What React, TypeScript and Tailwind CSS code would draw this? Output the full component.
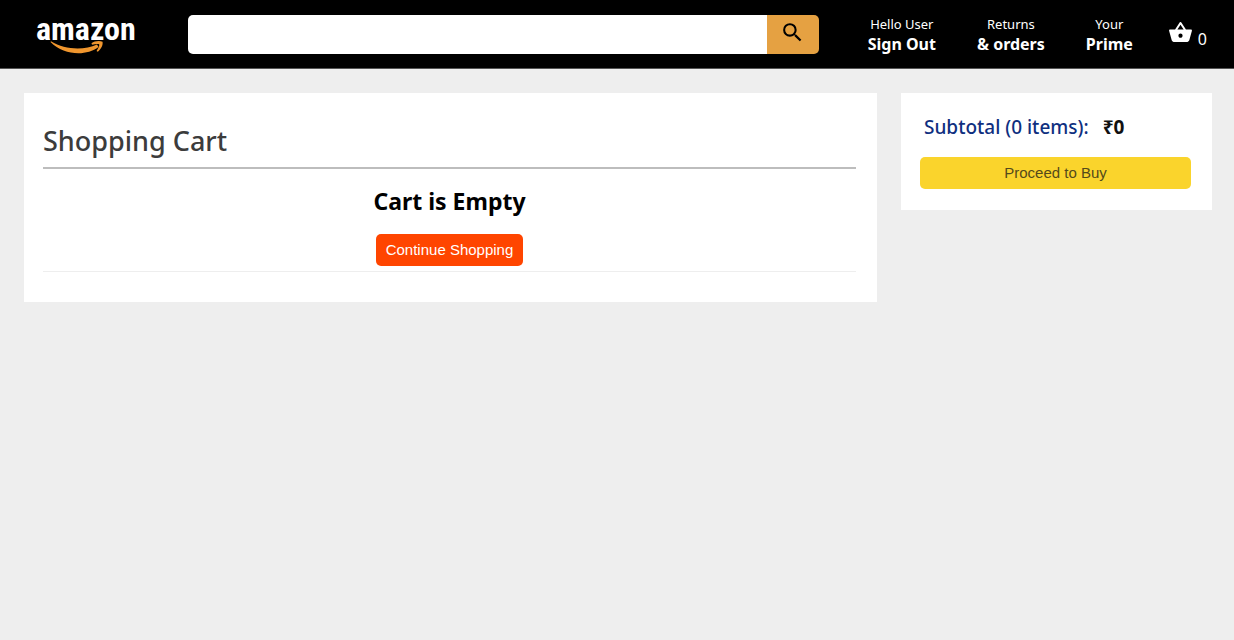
import React from "react";
import { MdSearch, MdShoppingBasket } from "react-icons/md";

const navLinks = [
  { top: "Hello User", bottom: "Sign Out" },
  { top: "Returns", bottom: "& orders" },
  { top: "Your", bottom: "Prime" },
];

function Logo() {
  return (
    <a href="#home" aria-label="amazon home" className="ml-9 block w-[99px] shrink-0">
      <svg viewBox="0 0 99 38" className="block w-full overflow-visible">
        <text
          x="0"
          y="25"
          fill="#fff"
          className="font-['Roboto_Condensed','Roboto',sans-serif] text-[32px] font-bold"
        >
          amazon
        </text>
        <path
          d="M14.500 27 C28 40.500 50 41.500 62.500 32 L61 29.500 C48 35.500 29 35 15 26.300 Z"
          fill="#f0962e"
        />
        <path
          d="M55.500 28.300 C58.500 25.600 64 25.500 66.500 26.700 C67.300 30 65 34 61.800 36.800 L60.600 36 C62 33.500 63.700 30.500 63.200 29.200 C61.500 28.600 58.500 29.200 56 29.700 Z"
          fill="#f0962e"
        />
      </svg>
    </a>
  );
}

function Header() {
  return (
    <header className="flex h-[69px] items-center border-b border-[#555] bg-black text-white">
      <Logo />
      <form role="search" className="ml-[53px] flex h-[39px] min-w-0 flex-1 overflow-hidden rounded-[5px]">
        <input type="search" aria-label="Search products" className="min-w-0 flex-1 bg-white px-3 text-black outline-none" />
        <button type="button" aria-label="Search" className="flex w-[52px] justify-center bg-[#e5a142] pt-[5px] text-black">
          <MdSearch size={25} />
        </button>
      </form>
      <nav className="ml-[49px] flex items-center gap-[41px]">
        {navLinks.map((link) => (
          <a key={link.top} href="#account" className="flex flex-col items-center whitespace-nowrap leading-5">
            <span className="text-[13px] leading-5">{link.top}</span>
            <span className="text-base font-bold leading-5">{link.bottom}</span>
          </a>
        ))}
      </nav>
      <a href="#cart" aria-label="Cart, 0 items" className="ml-[35px] mr-[27px] flex items-center gap-[5px]">
        <MdShoppingBasket size={25} className="mb-1" />
        <span className="pt-[9px] text-base">0</span>
      </a>
    </header>
  );
}

export default function App() {
  return (
    <div className="min-h-screen bg-[#eee] font-['Segoe_UI','Noto_Sans',sans-serif] text-black">
      <Header />
      <main className="flex items-start gap-6 pl-6 pr-[22px] pt-6">
        <section className="min-w-0 flex-1 bg-white pb-[30px] pl-[19px] pr-[21px] pt-[29px]">
          <h1 className="border-b-2 border-[#bdbdbd] pb-[7px] text-[27px] font-medium leading-[38px] text-[#3c3c3c]">
            Shopping Cart
          </h1>
          <div className="flex flex-col items-center border-b border-[#eee] pb-[5px] pt-4">
            <h2 className="text-[23px] font-bold leading-8">Cart is Empty</h2>
            <button type="button" className="mt-[17px] h-8 rounded-[5px] bg-[#ff4500] px-2.5 pt-px font-['Liberation_Sans',sans-serif] text-[15px] text-white">
              Continue Shopping
            </button>
          </div>
        </section>
        <aside className="w-[311px] shrink-0 bg-white pb-[21px] pl-[19px] pr-[21px] pt-[18px]">
          <p className="flex gap-[14px] px-1 text-[19px] leading-8">
            <span className="font-medium text-[#0f2f7f]">Subtotal (0 items):</span>
            <strong className="font-bold text-[#111]">₹0</strong>
          </p>
          <button type="button" className="mt-[14px] h-8 w-full rounded-[5px] bg-[#fad42c] pt-px font-['Liberation_Sans',sans-serif] text-[15px] text-[#544a1b]">
            Proceed to Buy
          </button>
        </aside>
      </main>
    </div>
  );
}
